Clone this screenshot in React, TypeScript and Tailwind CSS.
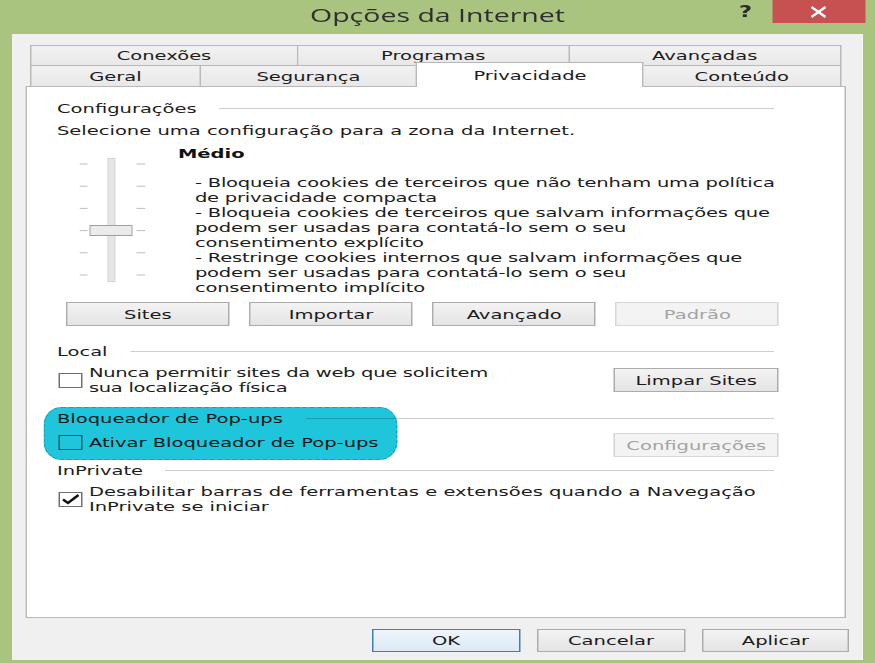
import React from 'react';

// The reference is a Win8 dialog stretched horizontally, so the whole window is laid
// out at 1/1.5 width and scaled back out with scale-x-150.

const Button: React.FC<{ label: string; className?: string; disabled?: boolean; primary?: boolean }> = ({
  label,
  className = '',
  disabled,
  primary,
}) => (
  <button
    type="button"
    className={`${className} flex items-center justify-center border text-[13px] leading-none ${
      disabled
        ? 'border-[#d6d6d6] bg-[#f3f3f3] text-[#a3a3a3]'
        : primary
        ? 'border-[#3d80b3] bg-linear-to-b from-[#eef5fb] to-[#dde9f4] text-[#1a1a1a]'
        : 'border-[#acacac] bg-linear-to-b from-[#f3f3f3] to-[#e4e4e4] text-[#1a1a1a]'
    }`}
  >
    {label}
  </button>
);

const SectionHeader: React.FC<{ title: string }> = ({ title }) => (
  <div className="flex items-center h-[16px]">
    <span className="whitespace-nowrap">{title}</span>
    <div className="flex-1 h-px bg-[#cdcdcd] ml-[15px] mr-[3px]" />
  </div>
);

const Checkbox: React.FC<{ checked?: boolean }> = ({ checked }) => (
  <div className="w-[16.67px] h-[15px] ml-[0.67px] border border-[#707070] bg-white shrink-0">
    {checked && (
      <svg viewBox="0 0 22 13" preserveAspectRatio="none" className="w-full h-full">
        <path d="M3 6.5 L8 10 L18.5 2" fill="none" stroke="#111" strokeWidth="2.6" />
      </svg>
    )}
  </div>
);

const Slider = () => (
  <svg viewBox="0 0 66 124" preserveAspectRatio="none" className="w-full h-full">
    {[6, 28.2, 50.4, 72.6, 94.8, 117].map((y) => (
      <g key={y}>
        <line x1="0" x2="8" y1={y} y2={y} stroke="#bdbdbd" />
        <line x1="57" x2="66" y1={y} y2={y} stroke="#bdbdbd" />
      </g>
    ))}
    <rect x="28.5" y="0.5" width="7" height="123" fill="#e6e6e6" stroke="#d3d3d3" />
    <rect x="10.5" y="67.5" width="42" height="10" fill="#ebebeb" stroke="#9f9f9f" />
  </svg>
);

const tabBase = 'flex items-center justify-center border-t border-[#b9b9b9] bg-linear-to-b from-[#f2f2f2] to-[#e8e8e8]';

const description = [
  '- Bloqueia cookies de terceiros que não tenham uma política',
  'de privacidade compacta',
  '- Bloqueia cookies de terceiros que salvam informações que',
  'podem ser usadas para contatá-lo sem o seu',
  'consentimento explícito',
  '- Restringe cookies internos que salvam informações que',
  'podem ser usadas para contatá-lo sem o seu',
  'consentimento implícito',
];

export default function App() {
  return (
    <div className="w-[875px] h-[663px] overflow-hidden bg-[#a8c47e]">
      <div className="w-[583.33px] h-[663px] origin-top-left scale-x-150 flex flex-col font-['DejaVu_Sans',sans-serif] text-[13px] leading-[15px] text-[#1c1c1c]">
        {/* Title bar */}
        <div className="h-[34px] shrink-0 grid grid-cols-[1fr_auto_1fr]">
          <div />
          <div className="pt-[6px] font-['Open_Sans',sans-serif] text-[19px] leading-none text-[#2f2f2f] whitespace-nowrap">
            Opções da Internet
          </div>
          <div className="flex justify-end items-start pr-[6.67px]">
            <span className="mt-[3px] mr-[14px] font-bold text-[15px] leading-[18px] text-[#2a2a2a]">?</span>
            <div className="w-[61.33px] h-[23px] bg-[#c75050]">
              <svg viewBox="0 0 92 23" preserveAspectRatio="none" className="w-full h-full">
                <path d="M39 7 L53 17 M53 7 L39 17" stroke="#fff" strokeWidth="2.4" fill="none" />
              </svg>
            </div>
          </div>
        </div>

        {/* Dialog body */}
        <div className="ml-[8px] w-[566.67px] h-[626px] bg-[#f0f0f0] pt-[11px] flex flex-col">
          <div className="ml-[12px] w-[540.67px]">
            <div className="flex h-[20px]">
              <div className={`${tabBase} w-[178.67px] border-l border-r`}>Conexões</div>
              <div className={`${tabBase} w-[181.33px] border-r`}>Programas</div>
              <div className={`${tabBase} w-[180.67px] border-r`}>Avançadas</div>
            </div>
            <div className="flex items-end h-[21px]">
              <div className={`${tabBase} w-[114px] h-[21px] border-l border-r`}>Geral</div>
              <div className={`${tabBase} w-[143.33px] h-[21px]`}>Segurança</div>
              <div className="relative z-10 w-[152px] h-[25px] -mb-px flex items-center justify-center border-t border-l border-r border-[#b9b9b9] bg-white">
                Privacidade
              </div>
              <div className={`${tabBase} w-[131.33px] h-[21px] border-r`}>Conteúdo</div>
            </div>
          </div>

          {/* Panel */}
          <div className="ml-[9.33px] w-[546.67px] h-[532px] shrink-0 border border-[#b9b9b9] bg-white pl-[19.67px] pr-[43.5px] flex flex-col">
            <div className="mt-[13px]">
              <SectionHeader title="Configurações" />
            </div>
            <div className="mt-[7px] h-[16px] whitespace-nowrap">Selecione uma configuração para a zona da Internet.</div>

            <div className="mt-[7px] h-[149px] flex">
              <div className="ml-[15.33px] mt-[12px] w-[44px] h-[124px] shrink-0">
                <Slider />
              </div>
              <div className="ml-[21.33px] flex flex-col">
                <div className="h-[16px] font-bold text-[#111]">Médio</div>
                <div className="mt-[13px] ml-[11.33px] whitespace-nowrap tracking-[-0.15px]">
                  {description.map((line, i) => (
                    <div key={i}>{line}</div>
                  ))}
                </div>
              </div>
            </div>

            <div className="mt-[7px] ml-[6px] flex gap-[13px]">
              <Button label="Sites" className="w-[109.33px] h-[24px]" />
              <Button label="Importar" className="w-[109.33px] h-[24px]" />
              <Button label="Avançado" className="w-[109.33px] h-[24px]" />
              <Button label="Padrão" disabled className="w-[109.33px] h-[24px]" />
            </div>

            <div className="mt-[17px]">
              <SectionHeader title="Local" />
            </div>
            <div className="mt-[6px] h-[30px] flex items-center justify-between">
              <div className="flex items-center">
                <Checkbox />
                <div className="ml-[4px] whitespace-nowrap tracking-[-0.2px]">
                  <div>Nunca permitir sites da web que solicitem</div>
                  <div>sua localização física</div>
                </div>
              </div>
              <Button label="Limpar Sites" className="w-[110.67px] h-[24px]" />
            </div>

            <div className="relative mt-[15px]">
              <SectionHeader title="Bloqueador de Pop-ups" />
              <div className="mt-[7px] h-[24px] flex items-center justify-between">
                <div className="flex items-center mb-[5px]">
                  <Checkbox />
                  <span className="ml-[4px] whitespace-nowrap">Ativar Bloqueador de Pop-ups</span>
                </div>
                <Button label="Configurações" disabled className="w-[110.67px] h-[24px]" />
              </div>
              {/* highlight marker drawn over the section */}
              <div className="absolute left-[-9.33px] top-[-3px] w-[236px] h-[53px] rounded-[12px/18px] border border-dashed border-[#12a4b8] bg-[#1fc6db] mix-blend-multiply pointer-events-none" />
            </div>

            <div className="mt-[5px]">
              <SectionHeader title="InPrivate" />
            </div>
            <div className="mt-[6px] h-[30px] flex items-center">
              <Checkbox checked />
              <div className="ml-[4px] whitespace-nowrap">
                <div>Desabilitar barras de ferramentas e extensões quando a Navegação</div>
                <div>InPrivate se iniciar</div>
              </div>
            </div>
          </div>

          {/* Footer buttons */}
          <div className="mt-[11px] flex justify-end gap-[11.33px] pr-[8.67px]">
            <Button label="OK" primary className="w-[98.67px] h-[23px]" />
            <Button label="Cancelar" className="w-[98.67px] h-[23px]" />
            <Button label="Aplicar" className="w-[98px] h-[23px]" />
          </div>
        </div>
      </div>
    </div>
  );
}
